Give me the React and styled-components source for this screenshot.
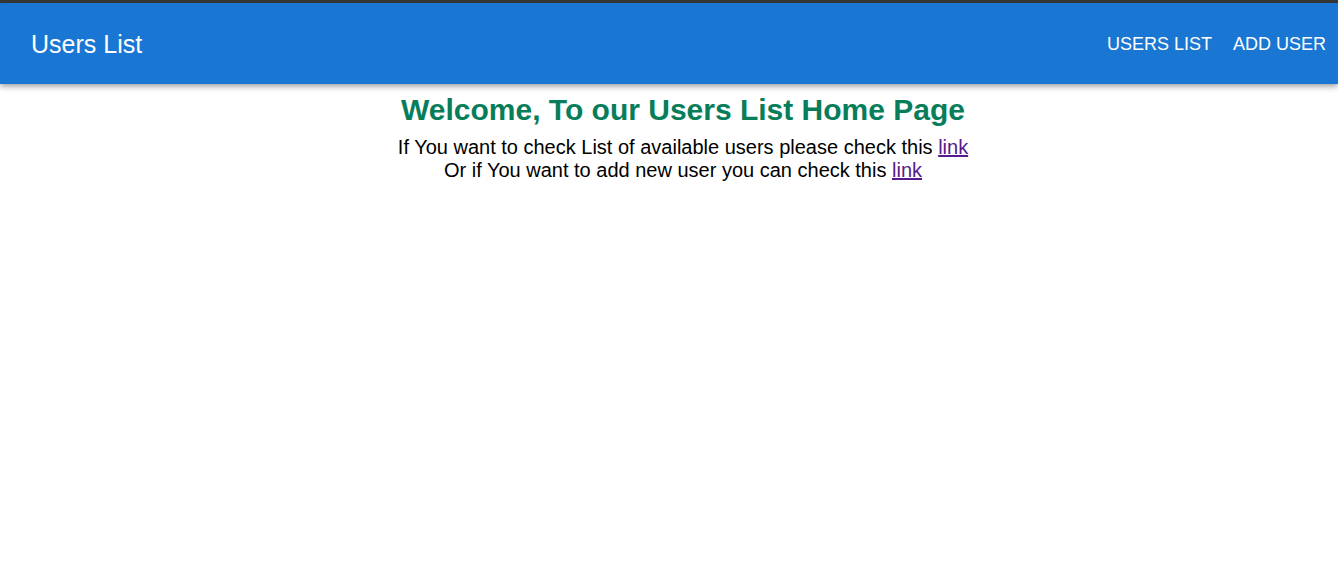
import React from "react";
import styled, { createGlobalStyle } from "styled-components";

const Global = createGlobalStyle`
  html, body { margin: 0; padding: 0; background: #ffffff; }
  body { font-family: "Liberation Sans", Arial, sans-serif; }
`;

const Page = styled.div`
  display: flex;
  flex-direction: column;
  min-height: 576px;
  border-top: 3px solid #383838;
  box-sizing: border-box;
`;

const AppBar = styled.header`
  height: 81px;
  background: #1976d2;
  color: #ffffff;
  display: flex;
  align-items: center;
  justify-content: space-between;
  padding: 0 12px 0 31px;
  box-shadow: 0 2px 4px -1px rgba(0,0,0,0.2), 0 4px 5px 0 rgba(0,0,0,0.14), 0 1px 10px 0 rgba(0,0,0,0.12);
  position: relative;
  z-index: 1;
`;

const Brand = styled.div`
  font-size: 25px;
  line-height: 1;
  margin-top: 1px;
`;

const Nav = styled.nav`
  display: flex;
  gap: 21px;
`;

const NavLink = styled.a`
  color: #ffffff;
  text-decoration: none;
  text-transform: uppercase;
  font-size: 18px;
  line-height: 1;
`;

const Main = styled.main`
  display: flex;
  flex-direction: column;
  align-items: center;
  text-align: center;
  padding: 9px 0 0 28px;
`;

const Heading = styled.h1`
  margin: 0 0 9px;
  font-size: 30px;
  font-weight: bold;
  color: #077d5a;
`;

const Text = styled.p`
  margin: 0;
  font-size: 20px;
  line-height: 23px;
  color: #000000;
`;

const Link = styled.a`
  color: #551a8b;
  text-decoration: underline;
`;

export default function App() {
  return (
    <>
      <Global />
      <Page>
        <AppBar>
          <Brand>Users List</Brand>
          <Nav>
            <NavLink href="#users">Users List</NavLink>
            <NavLink href="#add">Add User</NavLink>
          </Nav>
        </AppBar>
        <Main>
          <Heading>Welcome, To our Users List Home Page</Heading>
          <Text>
            If You want to check List of available users please check this <Link href="#users">link</Link>
            <br />
            Or if You want to add new user you can check this <Link href="#add">link</Link>
          </Text>
        </Main>
      </Page>
    </>
  );
}
